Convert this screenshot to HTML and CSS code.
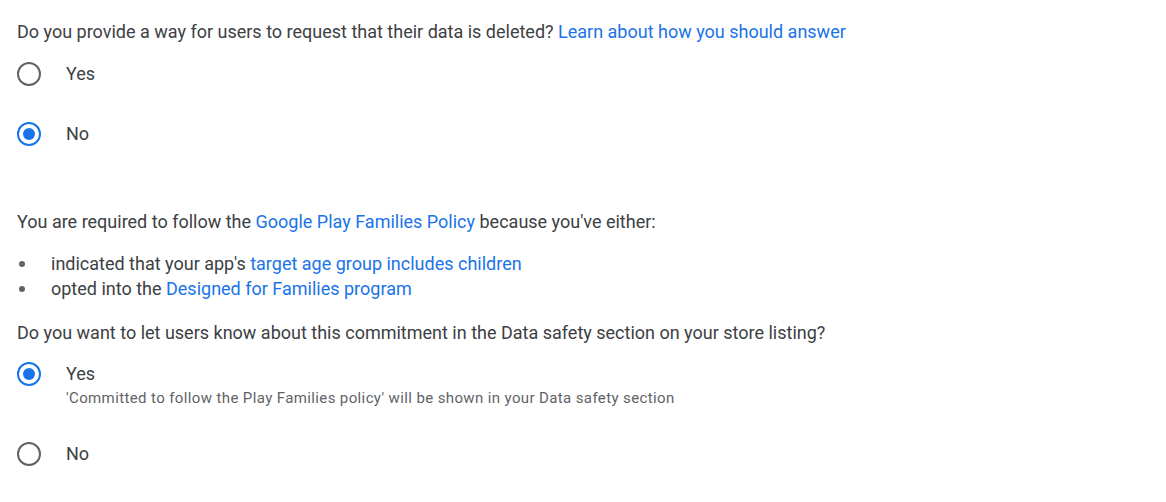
FILE: index.html
```html
<!DOCTYPE html>
<html>
<head>
<meta charset="utf-8">
<link rel="stylesheet" href="styles.css">
</head>
<body>
<div class="page">
  <p class="question q1">Do you provide a way for users to request that their data is deleted? <a class="link">Learn about how you should answer</a></p>
  <div class="options">
    <div class="option">
      <span class="radio"></span>
      <span class="label">Yes</span>
    </div>
    <div class="option">
      <span class="radio checked"></span>
      <span class="label">No</span>
    </div>
  </div>

  <p class="question q2">You are required to follow the <a class="link">Google Play Families Policy</a> because you've either:</p>
  <ul class="bullets">
    <li><span>indicated that your app's <a class="link">target age group includes children</a></span></li>
    <li><span>opted into the <a class="link">Designed for Families program</a></span></li>
  </ul>
  <p class="question q3">Do you want to let users know about this commitment in the Data safety section on your store listing?</p>
  <div class="options options-second">
    <div class="option option-with-sub">
      <span class="radio checked"></span>
      <div class="label-group">
        <span class="label">Yes</span>
        <span class="sublabel">'Committed to follow the Play Families policy' will be shown in your Data safety section</span>
      </div>
    </div>
    <div class="option">
      <span class="radio"></span>
      <span class="label">No</span>
    </div>
  </div>
</div>
</body>
</html>
```
FILE: styles.css
```css
html, body {
  margin: 0;
  padding: 0;
  background: #ffffff;
}
body {
  font-family: Roboto, "Liberation Sans", sans-serif;
  font-size: 18px;
  color: #3c4043;
}
.page {
  padding: 20px 17px 0 17px;
}
.question {
  margin: 0;
  line-height: 24px;
}
.link {
  color: #1a73e8;
  text-decoration: none;
}
.options {
  display: flex;
  flex-direction: column;
}
.option {
  display: flex;
  align-items: flex-start;
  gap: 25px;
  padding-top: 18px;
  padding-bottom: 18px;
}
.radio {
  width: 24px;
  height: 24px;
  box-sizing: border-box;
  border: 2.4px solid #5f6368;
  border-radius: 50%;
  flex: none;
  display: flex;
  align-items: center;
  justify-content: center;
}
.radio.checked {
  border-color: #1a73e8;
}
.radio.checked::after {
  content: "";
  width: 12px;
  height: 12px;
  border-radius: 50%;
  background: #1a73e8;
}
.label {
  line-height: 24px;
}
.label-group {
  display: flex;
  flex-direction: column;
}
.sublabel {
  font-size: 15px;
  letter-spacing: 0.38px;
  color: #5f6368;
  line-height: 24px;
}
.q2 {
  margin-top: 46px;
}
.bullets {
  list-style: none;
  margin: 17px 0 0 0;
  padding: 0;
  line-height: 25px;
}
.bullets li {
  display: flex;
  align-items: center;
}
.bullets li::before {
  content: "";
  flex: none;
  width: 6px;
  height: 6px;
  border-radius: 50%;
  background: #5f6368;
  margin-left: 2px;
  margin-right: 26px;
}
.q3 {
  margin-top: 20px;
}
.options-second .option:first-child {
  padding-top: 17px;
}
.option-with-sub {
  padding-bottom: 14px;
}
```
